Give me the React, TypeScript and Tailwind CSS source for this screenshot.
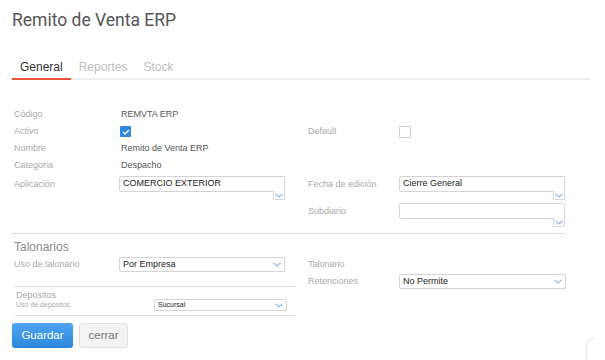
import React from "react"

const Chevron = () => (
  <svg width="8" height="5" viewBox="0 0 8 5" className="block">
    <polyline
      points="0.5,0.8 4,4 7.5,0.8"
      fill="none"
      stroke="#86b4ea"
      strokeWidth="1.1"
    />
  </svg>
)

// select whose dropdown button hangs below the box (as in the form)
const TallSelect = ({ value, className }: { value?: string; className: string }) => (
  <div className={`relative h-[24px] ${className}`}>
    <div className="h-[16px] border border-[#d4d4d4] rounded-[2px] flex items-center pl-[3px] text-[9px] text-[#222]">
      {value}
    </div>
    <div className="absolute right-0 top-[15px] w-[12px] h-[9px] bg-white border-x border-b border-[#d4d4d4] rounded-b-[2px] flex items-center justify-center">
      <Chevron />
    </div>
  </div>
)

const Select = ({
  value,
  className,
  small
}: {
  value: string
  className: string
  small?: boolean
}) => (
  <div
    className={`border border-[#d4d4d4] rounded-[2px] flex items-center justify-between pl-[3px] pr-[3px] text-[#222] ${
      small ? "text-[7px]" : "text-[9px]"
    } ${className}`}
  >
    <span>{value}</span>
    <Chevron />
  </div>
)

const Label = ({ children, className = "" }: { children: React.ReactNode; className?: string }) => (
  <span className={`text-[9px] text-[#aaaaaa] ${className}`}>{children}</span>
)

export default function App() {
  return (
    <div
      className="relative w-[605px] h-[360px] bg-white overflow-hidden px-3"
      style={{ fontFamily: '"Liberation Sans", Arial, sans-serif' }}
    >
      <h1
        className="pt-[10px] text-[17.5px] leading-[21px] text-[#555]"
        style={{ fontFamily: "Roboto, sans-serif" }}
      >
        Remito de Venta ERP
      </h1>

      <div className="mt-[29px] w-[578px] flex border-b-2 border-[#eeeeee] text-[12px] leading-[14px]">
        <div className="px-2 pb-1 border-b-2 border-[#e8503a] -mb-[2px] text-[#333]">General</div>
        <div className="px-2 pb-1 text-[#bdbdbd]">Reportes</div>
        <div className="px-2 pb-1 text-[#bdbdbd]">Stock</div>
      </div>

      <div className="mt-[26px]">
        <div className="flex h-[17px] items-center">
          <div className="w-[296px] flex items-center">
            <Label className="w-[107px] pl-[2px]">Código</Label>
            <span className="pl-[2px] text-[9px] text-[#555]">REMVTA ERP</span>
          </div>
        </div>
        <div className="flex h-[17px] items-center">
          <div className="w-[296px] flex items-center">
            <Label className="w-[108px] pl-[2px]">Activo</Label>
            <span className="w-[11px] h-[11px] rounded-[1px] bg-[#2d8ae0] flex items-center justify-center">
              <svg width="8" height="6" viewBox="0 0 8 6">
                <polyline points="1,3 3,5 7,1" fill="none" stroke="white" strokeWidth="1.3" />
              </svg>
            </span>
          </div>
          <Label className="w-[91px]">Default</Label>
          <span className="w-[12px] h-[12px] border border-[#d0d0d0] rounded-[1px] bg-white" />
        </div>
        <div className="flex h-[17px] items-center">
          <Label className="w-[107px] pl-[2px]">Nombre</Label>
          <span className="pl-[2px] text-[9px] text-[#555]">Remito de Venta ERP</span>
        </div>
        <div className="flex h-[17px] items-center">
          <Label className="w-[107px] pl-[2px]">Categoria</Label>
          <span className="pl-[2px] text-[9px] text-[#555]">Despacho</span>
        </div>

        <div className="flex mt-[2px]">
          <div className="w-[296px] flex">
            <Label className="w-[107px] pl-[2px] leading-[16px]">Aplicación</Label>
            <TallSelect value="COMERCIO EXTERIOR" className="w-[166px]" />
          </div>
          <Label className="w-[91px] leading-[16px]">Fecha de edición</Label>
          <TallSelect value="Cierre General" className="w-[166px]" />
        </div>
        <div className="flex mt-[3px]">
          <div className="w-[296px]" />
          <Label className="w-[91px] leading-[16px]">Subdiario</Label>
          <TallSelect className="w-[166px]" />
        </div>
      </div>

      <div className="mt-[6px] w-[553px] border-t border-[#dcdcdc]" />

      <div className="flex mt-[6px]">
        <div className="w-[296px]">
          <h2 className="text-[12px] leading-[14px] text-[#8a8a8a] pl-[2px]">Talonarios</h2>
          <div className="flex items-center mt-[3px]">
            <Label className="w-[107px] pl-[2px]">Uso de talonario</Label>
            <Select value="Por Empresa" className="w-[166px] h-[15px]" />
          </div>
          <div className="mt-[14px] ml-[3px] w-[280px] border-t border-b border-[#dcdcdc] pb-[4px]">
            <div className="pt-[3px] pl-[1px] text-[9px] leading-[11px] text-[#aaaaaa]">Depositos</div>
            <div className="flex items-center -mt-[2px] h-[12px]">
              <span className="w-[139px] pl-[1px] text-[7px] text-[#aaaaaa]">Uso de depositos</span>
              <Select value="Sucursal" small className="w-[133px] h-[12px]" />
            </div>
          </div>
        </div>
        <div className="pt-[17px]">
          <Label className="block leading-[14px]">Talonario</Label>
          <div className="flex items-center mt-[3px]">
            <Label className="w-[91px]">Retenciones</Label>
            <Select value="No Permite" className="w-[167px] h-[15px]" />
          </div>
        </div>
      </div>

      <div className="flex gap-[6px] mt-[7px]">
        <button className="w-[61px] h-[25px] rounded-[3px] bg-gradient-to-b from-[#4ea6f2] to-[#2b86dc] text-white text-[11.5px]">
          Guardar
        </button>
        <button className="w-[49px] h-[25px] rounded-[3px] bg-[#f3f3f3] border border-[#e0e0e0] text-[#777] text-[11.5px]">
          cerrar
        </button>
      </div>

      <div className="absolute left-[586px] top-[338px] w-[8px] h-[30px] border-l border-t border-[#e6e6e6] rounded-tl-[8px]" />
    </div>
  )
}
